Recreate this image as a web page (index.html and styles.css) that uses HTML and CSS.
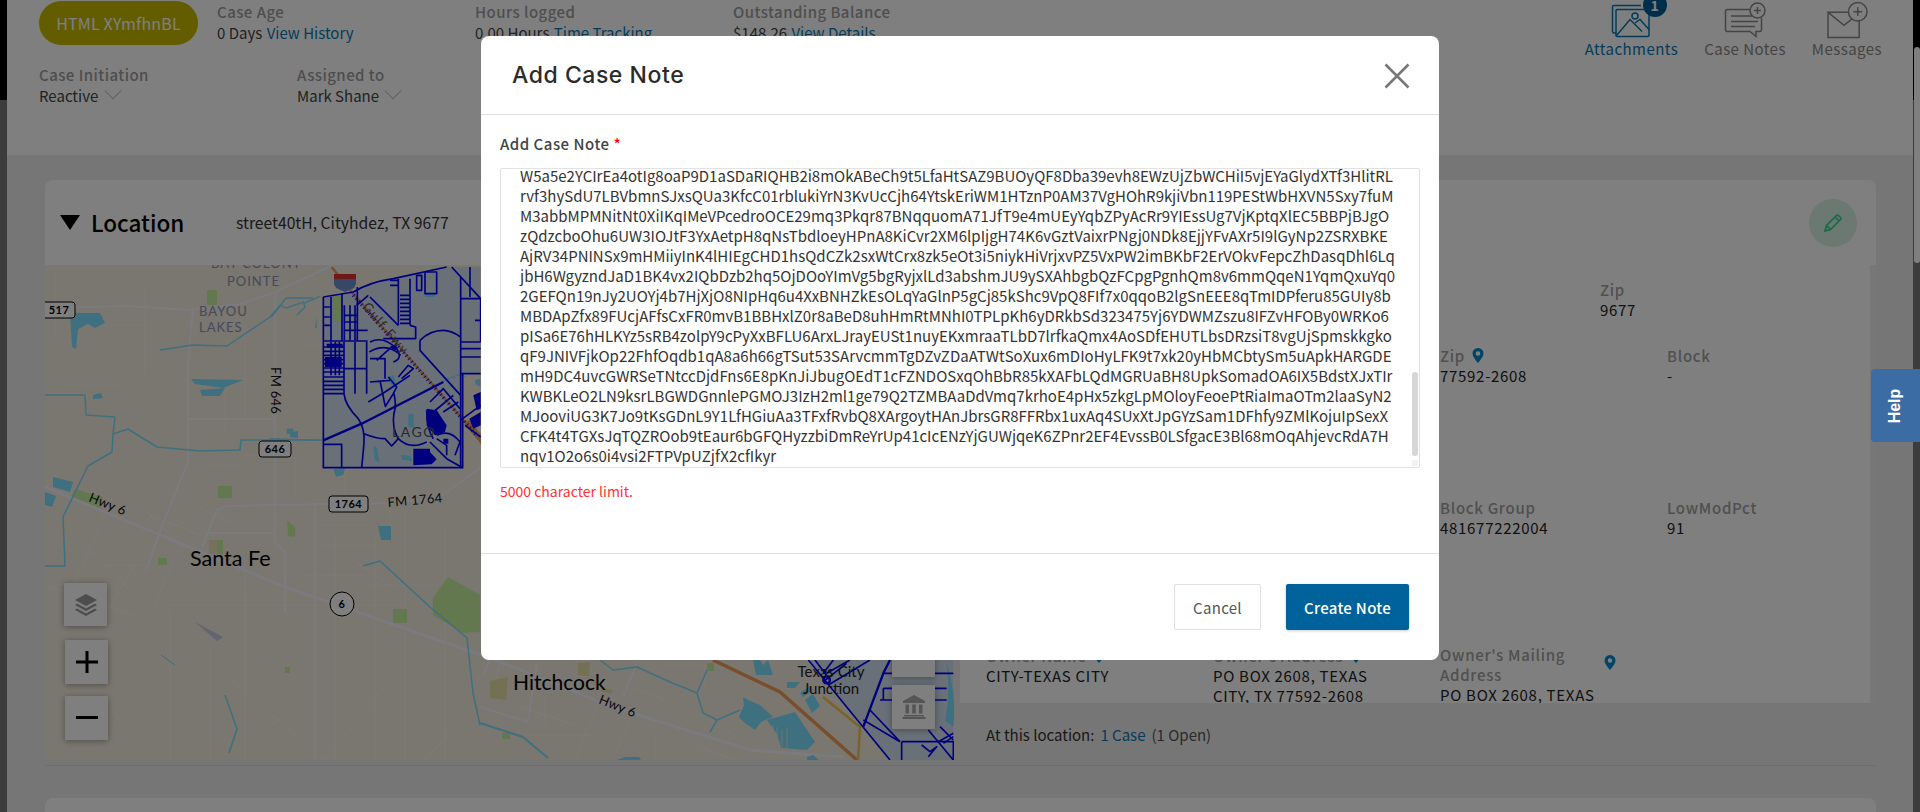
FILE: index.html
```html
<!DOCTYPE html>
<html lang="en">
<head>
<meta charset="utf-8">
<title>Add Case Note</title>
<link rel="stylesheet" href="styles.css">
</head>
<body>
<div class="shell">
  <div class="edge"><div class="edge-top"></div></div>
  <main class="main">
    <header class="case-head">
      <div class="head-row">
        <span class="pill">HTML XYmfhnBL</span>
        <div class="stat stat-age"><div class="lbl">Case Age</div><div class="val">0 Days <a class="link">View History</a></div></div>
        <div class="stat stat-hours"><div class="lbl">Hours logged</div><div class="val">0.00 Hours <a class="link">Time Tracking</a></div></div>
        <div class="stat"><div class="lbl">Outstanding Balance</div><div class="val">$148.26 <a class="link">View Details</a></div></div>
        <div class="tools">
          <div class="tool tool-on">
            <span class="badge">1</span>
            <svg class="tool-icon" width="42" height="36" viewBox="0 0 42 36" fill="none" stroke="currentColor" stroke-width="1.5"><path d="M6 31.5H3.500a2 2 0 0 1-1-1.500V5.500a1.500 1.500 0 0 1 1.500-1.500h27"/><rect x="6" y="8" width="33" height="27" rx="1"/><circle cx="25" cy="14.500" r="3"/><path d="M6.500 34 20 18l12 12M25 21.500l5-3.500 9 10"/></svg>
            <span class="tool-label">Attachments</span>
          </div>
          <div class="tool">
            <svg class="tool-icon" width="42" height="36" viewBox="0 0 42 36" fill="none" stroke="currentColor" stroke-width="1.500"><path d="M32 8H3.500a2 2 0 0 0-2 2v18a2 2 0 0 0 2 2H26l6 5v-5h3.500a2 2 0 0 0 2-2V16"/><path d="M7 14.500h25M7 20h27M7 25h24"/><circle cx="33.500" cy="9" r="7.500" fill="#fff"/><path d="M33.500 5.500v7M30 9h7"/></svg>
            <span class="tool-label">Case Notes</span>
          </div>
          <div class="tool">
            <svg class="tool-icon" width="46" height="40" viewBox="0 0 46 40" fill="none" stroke="currentColor" stroke-width="1.500"><path d="M3.500 12.500h32v26H3.500z"/><path d="M4 13l16 13 16-13"/><circle cx="34" cy="12" r="9.500" fill="#fff"/><path d="M34 7.500v9M29.500 12h9"/></svg>
            <span class="tool-label">Messages</span>
          </div>
        </div>
      </div>
      <div class="head-row head-row-b">
        <div class="stat stat-init"><div class="lbl">Case Initiation</div><div class="val">Reactive <span class="chev"></span></div></div>
        <div class="stat"><div class="lbl">Assigned to</div><div class="val">Mark Shane <span class="chev"></span></div></div>
      </div>
    </header>

    <section class="cases">
      <article class="card">
        <div class="card-head">
          <span class="tri"></span>
          <h2 class="card-title">Location</h2>
          <span class="card-addr">street40tH, Cityhdez, TX 9677</span>
          <span class="edit-btn">
            <svg width="20" height="20" viewBox="0 0 20 20" fill="none" stroke="#2fd68e" stroke-width="1.700"><path d="M2 18l1.500-5.500L13.500 2.500a1.500 1.500 0 0 1 2 0l2 2a1.500 1.500 0 0 1 0 2L7.500 16.500z"/><path d="M12 4l4 4M3.500 12.500l4 4"/></svg>
          </span>
        </div>
        <div class="card-body">
          <div class="map">
            <svg class="map-art" width="909" height="495" viewBox="0 0 909 495" fill="none">
              <g stroke="#fbf6ee" stroke-width="1">
                <path d="M10 10v60M40 60h60v50M20 120h60M100 20v80M0 320l90 30M30 270l60 60M60 250l-40 90M90 300l-30 50M120 270l60 30M130 290l-20 50M150 300h40M200 330v100M120 340h240M125 345v150M165 380v115M200 300v195M290 270v225M330 270v225M360 240v255M400 260v235M180 120v50M255 80h30M200 60v100M0 400l80 95M60 440l50 55M180 410l100 85M210 470l60-40M340 420l-60 75M440 430l-60 65M325 320h80M300 290l45 30"/>
                <path d="M470 440l60 20M480 470h70M560 420l-30 75M610 470v25M650 480l40 15M500 410v50M590 440l-20 50M530 400l90 35M620 400h40v25M665 455l40 25M455 400l-10 30M510 410l40 12M610 430l20 10"/>
                <path d="M200 190h30v60M250 190v40M160 200h40M150 240l40 20M100 245l40 40M60 300h40M275 260h50M270 280h60M260 310h60M300 205v30M345 230v40M130 255l40 16M105 250l60 24"/>
              </g>
              <g fill="#c8f0a0"><rect x="162" y="25" width="10" height="15"/><rect x="173" y="221" width="14" height="12"/><rect x="348" y="344" width="14" height="14"/><rect x="113" y="293" width="9" height="7"/><path d="M242 256l8 6v10l-7-1z"/><rect x="172" y="275" width="6" height="14"/><rect x="240" y="402" width="5" height="6"/><rect x="457" y="468" width="8" height="6"/><rect x="662" y="398" width="7" height="8"/><path d="M30 224l28 8-3 12-30-10z"/><path d="M388 333l15-21 32 18v37l-17 1-30-18z"/></g>
              <g fill="#e8e0a6"><path d="M445 416l18-4-2 23-16-2z"/><path d="M533 398l12-1-1 14-11-1z"/><path d="M558 422l10 4-2 3-10-3z"/><rect x="164" y="275" width="8" height="14" opacity=".7"/></g>
              <g stroke="#f6f6ff" stroke-linejoin="round" stroke-width="2">
                <path d="M0 43l82-2 63 4 50-6 33-11L288 0"/>
                <path d="M230 28v249l10 10v60"/>
                <path d="M270 238v257"/>
                <path d="M148 45l-5 52v100l-28 69-14 40"/>
                <path d="M143 154h87"/>
                <path d="M157 282l15-37 10-4 103-2M322 239l70-5 43-31"/>
                <path d="M163 268h67"/>
                <path d="M0 222l240 100 205 71 123 49 137 43 95 7" stroke-width="3"/>
                <path d="M435 442l48 15 9-59M592 398l-14 34M445 395l-6 14"/>
              </g>
              <path d="M150 357l28 15 -6 4z" fill="#c5c8e0"/>
              <g stroke="#7ee0ff" stroke-width="1.500" stroke-linejoin="round">
                <path d="M0 130h40l1 20 29 2-2 17 15-5 29 18 43 4 40-1 1-10 81 0"/>
                <path d="M68 169l-1 18-24 14-25 51 2 49H0"/>
                <path d="M115 85l33-5 34 1 46-31 13-17 27 0"/>
                <path d="M318 301l17-5 50 46 37 31 6 55 7 32"/>
                <path d="M555 395l13 10 24-3 33 15 27 11 10-23M652 428l6 20 14 7 23-10M672 455l-7 12"/>
                <path d="M435 458l43 14 25 21" stroke-width="2"/>
                <path d="M180 430l12 34 -8 24"/>
                <path d="M116 390l14 10" stroke-width="1"/>
              </g>
              <g fill="#7ee0ff">
                <path d="M8 212l20 5-3 10-17-5zM0 227l11 4-4 11-7-2zM25 48l30 0 5 10-10 5-7-4-10 5-2 20-4-2zM146 114l52 1-20 8 -28-4zM155 125l25-2-5 8-18 0zM48 130l8-2 2 5-10 1zM333 261h13v14h-10zM245 167l8-1v7l-8-1z"/>
                <path d="M708 395l7 0 3 5 5-5 5 15h-17zM742 417h13l-5 6h-8zM755 428l10-7 3 4-10 7zM760 435l8-6 7 12-8 7z"/>
                <path d="M698 432l5 3 12 5 13 12-12 5-6 8-10-7-6-6 5-12zM722 455l28-8 20 30-8 8-26-2-4-14z"/>
                <path d="M572 495l8-3h14l2 3zM762 492l6-2 6 5h-12z"/>
              </g>
              <g stroke="#f4ece0" stroke-width=".8"><path d="M728 460v25M732 462v23M737 465v20M742 463v22M768 470l8 20M772 468l10 22M777 474l8 16"/></g>
              <path d="M668 395l67 32 77 68" stroke="#f09c58" stroke-width="3.500"/>
              <path d="M778 432l37 30-2 33" stroke="#f4c450" stroke-width="2.500"/>
              <g transform="translate(435 235) scale(.33333)">
                <path d="M985 480L1230 780H1420V480z" fill="#d2e0f0"/>
                <path d="M1400 490Q1430 580 1420 680L1395 662Q1412 580 1400 490z" fill="#7ee0ff"/>
                <g stroke="#0000ff" stroke-width="5" stroke-linejoin="round">
                  <path d="M985 480L1230 780M1005 480L1050 540M1040 520L1110 480M1030 545L1100 490M1045 555L1170 480M1060 480L1030 520"/>
                  <path d="M1150 680L1210 520L1230 480" stroke-width="7"/>
                  <path d="M1210 520H1420M1210 565H1400M1200 600H1400M1210 565V600M1150 660L1260 725M1170 630L1260 725M1265 725H1420V780M1265 725V780"/>
                  <path d="M1345 690L1420 780M1325 735L1350 755L1370 740L1345 770M1375 725L1420 700M1390 730L1420 710M1380 680L1420 720"/>
                </g>
                <circle cx="1040" cy="540" r="10" stroke="#0000ff" stroke-width="7"/>
              </g>
              <g transform="translate(225 -3) scale(.33333)">
                <path d="M160 105l90-15Q300 60 370 50L530 15H632V335H578V617H160z" fill="#d2e0f0"/>
                <path d="M188 100h28v80h-28z" fill="#c8f0a0"/>
                <g fill="#7ee0ff"><path d="M415 455h15l3 45-18-5zM350 345l20-6 12 30-14 7zM310 550l12 10 6 40-14-5zM392 578l30 5 5 15-30-5zM190 622l35-4-5 20-22 6zM615 355l16-5v25l-14-8zM50 500h20v15h-20zM140 165l-5 30 5 5zM465 105h30v-8h-30z"/></g>
                <g stroke="#7ee0ff" stroke-width="4" fill="none"><path d="M0 165l30-35 20 8 50-18 5 15-25 25M100 125l50-22M520 358l45-20 20 5"/><path d="M0 530l155 5"/></g>
                <path d="M185 15l60 75L620 520l20 30" stroke="#f09c58" stroke-width="7"/>
                <path d="M590 480l50 60" stroke="#f09c58" stroke-width="18"/>
                <g stroke="#0000ff" stroke-width="5" stroke-linejoin="round">
                  <path d="M160 105V617H578V335M160 105l90-15Q300 60 370 50L530 15"/>
                  <path d="M545 15l87 95M572 45V617M600 15V105M572 110H632V240M572 240H632M572 260H632M572 285H632M572 335H632M615 175H632"/>
                  <path d="M385 50V190M420 50V190M360 55h25M360 70h25V50M440 40h15V85h-15zM465 30h35V95H465z"/>
                  <path d="M390 100h30M390 112h30M390 124h30M390 136h30M390 148h30M390 160h30M390 172h30M390 184h30"/>
                  <path d="M420 190l17 5v35H340M300 105l85 85"/>
                  <path d="M450 235Q480 205 520 205Q545 205 572 225M450 235V265L572 400"/>
                  <path d="M183 105V237M216 95V237M160 135H183M160 165H183M160 190H183M160 237H293M262 75V237"/>
                  <path d="M223 130V235M240 130V235M255 130V235M223 160H262M223 180H262M223 205H293M295 100l-35 30"/>
                  <path d="M160 345H222M160 358H222M160 370H222M160 382H222M160 395H222M222 240V395M255 240V395M290 240V395M222 320H290"/>
                  <path d="M183 240V340M196 240V340M208 240V340M160 255H222M160 268H222M160 280H222M160 293H222M160 305H222M160 318H222M160 330H222"/>
                  <path d="M222 395Q225 430 265 470Q285 500 282 540Q280 570 275 617"/>
                  <path d="M160 535L275 485L520 360" stroke-width="7"/>
                  <path d="M160 547H215V617M295 420L345 390L420 340M282 515Q320 530 345 530L365 552L385 530"/>
                  <path d="M372 450Q365 500 385 530Q420 565 470 540M330 355L345 430M300 360L360 355M355 345L380 375L370 395L345 435M372 395Q380 430 372 455"/>
                  <path d="M300 240Q340 220 380 260Q400 290 370 300M298 270Q350 240 392 280M320 295L370 250M300 290H345V350M395 350L430 320L415 310L385 345"/>
                  <path d="M480 420L520 380L570 440M490 450L550 400M500 520Q540 500 570 540L555 580M530 590L578 617M480 540Q510 570 530 590M470 445Q470 500 490 530M578 470L632 430M520 450l45-30M585 490l47 35M500 530l30 20v30"/>
                </g>
                <path d="M250 100L620 520" stroke="#0000ff" stroke-width="11" stroke-dasharray="3 9" opacity=".9"/>
                <g fill="#0000ff">
                  <path d="M470 440l30 5 30 45-5 20-30 10-25-30zM430 560h50v10l20 22-15 15-55 3zM610 400l22-10v50l-12 5zM598 470l34-20v40l-22 10zM165 285h50v30h-50zM170 245h48v12h-48zM365 250h15v15h-15zM520 530h15v15h-15z"/>
                </g>
              </g>
              <g class="shield"><rect x="-6" y="37" width="36" height="16" rx="3"/><rect x="214" y="176" width="32" height="16" rx="3"/><rect x="284" y="231" width="39" height="16" rx="3"/><circle cx="297" cy="339" r="12"/></g>
              <path d="M289 13h22v6l-2 4-9 4-9-4-2-4z" fill="#6f8fd0"/><path d="M289 9h22v5h-22z" fill="#e03030"/>
              <text class="m-shield" x="14" y="49" text-anchor="middle">517</text>
              <text class="m-shield" x="230" y="188" text-anchor="middle">646</text>
              <text class="m-shield" x="303.500" y="243" text-anchor="middle">1764</text>
              <text class="m-shield" x="297" y="343" text-anchor="middle">6</text>
              <text class="m-area" x="166" y="3">BAY COLONY</text>
              <text class="m-area" x="182" y="21">POINTE</text>
              <text class="m-area" x="154" y="51">BAYOU</text>
              <text class="m-area" x="154" y="67">LAKES</text>
              <text class="m-area m-dark" x="347" y="172">LAGO</text>
              <text class="m-town m-town-a" x="145" y="301">Santa Fe</text>
              <text class="m-town" x="468" y="425">Hitchcock</text>
              <text class="m-road" transform="translate(43 236) rotate(22)">Hwy 6</text>
              <text class="m-road" transform="translate(553 438) rotate(22)">Hwy 6</text>
              <text class="m-road" transform="translate(226 102) rotate(90)">FM 646</text>
              <text class="m-road" transform="translate(343 242) rotate(-5)">FM 1764</text>
              <text class="m-road m-hwy" transform="translate(317 42) rotate(50)">Gulf Fwy</text>
              <text class="m-city" x="786" y="412" text-anchor="middle">Texas City</text>
              <text class="m-city" x="786" y="429" text-anchor="middle">Junction</text>
            </svg>
            <span class="map-btn map-btn-layers">
              <svg width="24" height="22" viewBox="0 0 24 22" fill="#9a9a9a"><path d="M12 0l11 6-11 6L1 6z"/><path d="M3 9.500l9 5 9-5 2 1.500-11 6-11-6z"/><path d="M3 14.500l9 5 9-5 2 1.500-11 6-11-6z"/></svg>
            </span>
            <span class="map-btn map-btn-plus">
              <svg width="22" height="22" viewBox="0 0 22 22" fill="#000"><path d="M9.500 0h3v9.500H22v3h-9.500V22h-3v-9.500H0v-3h9.500z"/></svg>
            </span>
            <span class="map-btn map-btn-minus">
              <svg width="22" height="4" viewBox="0 0 22 4" fill="#000"><path d="M0 0h22v3H0z"/></svg>
            </span>
            <span class="map-btn map-btn-up"></span>
            <span class="map-btn map-btn-bank">
              <svg width="24" height="24" viewBox="0 0 24 24" fill="#aaa"><path d="M12 0l11 6v2H1V6z"/><path d="M3.500 9.500h3.500v9H3.500zM10.200 9.500h3.600v9h-3.600zM17 9.500h3.500v9H17z"/><path d="M2 20h20v1.500H2zM0.500 22h23v2H0.500z"/></svg>
            </span>
          </div>
          <div class="gutter"></div>
          <div class="side">
            <div class="info">
              <div class="info-row info-row-a">
                <div class="field"><div class="f-lbl">Zip</div><div class="f-val">9677</div></div>
              </div>
              <div class="info-row info-row-b">
                <div class="field"><div class="f-lbl">Zip <svg class="pin" width="12" height="15" viewBox="0 0 12 15"><path fill-rule="evenodd" fill="#0088cc" d="M6 0a5.500 5.500 0 0 1 5.500 5.500C11.500 9 6 15 6 15S.5 9 .5 5.500A5.500 5.500 0 0 1 6 0zm0 3.200a2.300 2.300 0 1 0 0 4.600 2.300 2.300 0 0 0 0-4.600z"/></svg></div><div class="f-val">77592-2608</div></div>
                <div class="field"><div class="f-lbl">Block</div><div class="f-val">-</div></div>
              </div>
              <div class="info-row info-row-c">
                <div class="field"><div class="f-lbl">Block Group</div><div class="f-val">481677222004</div></div>
                <div class="field"><div class="f-lbl">LowModPct</div><div class="f-val">91</div></div>
              </div>
              <div class="info-row info-row-d">
                <div class="field"><div class="f-lbl">Owner Name <svg class="pin" width="12" height="15" viewBox="0 0 12 15"><path fill-rule="evenodd" fill="#0088cc" d="M6 0a5.500 5.500 0 0 1 5.500 5.500C11.500 9 6 15 6 15S.5 9 .5 5.500A5.500 5.500 0 0 1 6 0zm0 3.200a2.300 2.300 0 1 0 0 4.600 2.300 2.300 0 0 0 0-4.600z"/></svg></div><div class="f-val">CITY-TEXAS CITY</div></div>
                <div class="field"><div class="f-lbl">Owner's Address <svg class="pin" width="12" height="15" viewBox="0 0 12 15"><path fill-rule="evenodd" fill="#0088cc" d="M6 0a5.500 5.500 0 0 1 5.500 5.500C11.500 9 6 15 6 15S.5 9 .5 5.500A5.500 5.500 0 0 1 6 0zm0 3.200a2.300 2.300 0 1 0 0 4.600 2.300 2.300 0 0 0 0-4.600z"/></svg></div><div class="f-val f-val-addr">PO BOX 2608, TEXAS CITY, TX 77592-2608</div></div>
                <div class="field field-pin"><div class="f-lbl">Owner's Mailing Address</div><svg class="pin pin-side" width="12" height="15" viewBox="0 0 12 15"><path fill-rule="evenodd" fill="#0088cc" d="M6 0a5.500 5.500 0 0 1 5.500 5.500C11.500 9 6 15 6 15S.5 9 .5 5.500A5.500 5.500 0 0 1 6 0zm0 3.200a2.300 2.300 0 1 0 0 4.600 2.300 2.300 0 0 0 0-4.600z"/></svg><div class="f-val">PO BOX 2608, TEXAS</div></div>
              </div>
            </div>
            <div class="side-foot"><span class="at-label">At this location:</span> <a class="link">1 Case</a> <span class="at-open">(1 Open)</span></div>
          </div>
          <div class="side-scroll"></div>
        </div>
      </article>
      <div class="card card-next"></div>
    </section>
  </main>
  <div class="edge edge-right"><div class="edge-top"></div><span class="page-thumb"></span></div>
</div>

<div class="overlay"></div>

<a class="help-tab"><span class="help-text">Help</span></a>

<div class="modal">
  <div class="modal-head">
    <h1 class="modal-title">Add Case Note</h1>
    <svg class="modal-close" width="26" height="26" viewBox="0 0 26 26" stroke="#777" stroke-width="2.600"><path d="M1.500 1.500l23 23M24.500 1.500l-23 23"/></svg>
  </div>
  <div class="modal-body">
    <label class="note-label">Add Case Note <span class="req">*</span></label>
    <div class="note-box">
      <div class="note-text">W5a5e2YCIrEa4otIg8oaP9D1aSDaRIQHB2i8mOkABeCh9t5LfaHtSAZ9BUOyQF8Dba39evh8EWzUjZbWCHiI5vjEYaGlydXTf3HlitRL
rvf3hySdU7LBVbmnSJxsQUa3KfcC01rblukiYrN3KvUcCjh64YtskEriWM1HTznP0AM37VgHOhR9kjiVbn119PEStWbHXVN5Sxy7fuM
M3abbMPMNitNt0XiIKqIMeVPcedroOCE29mq3Pkqr87BNqquomA71JfT9e4mUEyYqbZPyAcRr9YIEssUg7VjKptqXlEC5BBPjBJgO
zQdzcboOhu6UW3IOJtF3YxAetpH8qNsTbdloeyHPnA8KiCvr2XM6lpIjgH74K6vGztVaixrPNgj0NDk8EjjYFvAXr5I9lGyNp2ZSRXBKE
AjRV34PNINSx9mHMiiyInK4lHIEgCHD1hsQdCZk2sxWtCrx8zk5eOt3i5niykHiVrjxvPZ5VxPW2imBKbF2ErVOkvFepcZhDasqDhl6Lq
jbH6WgyzndJaD1BK4vx2IQbDzb2hq5OjDOoYImVg5bgRyjxlLd3abshmJU9ySXAhbgbQzFCpgPgnhQm8v6mmQqeN1YqmQxuYq0
2GEFQn19nJy2UOYj4b7HjXjO8NIpHq6u4XxBNHZkEsOLqYaGlnP5gCj85kShc9VpQ8FIf7x0qqoB2lgSnEEE8qTmIDPferu85GUIy8b
MBDApZfx89FUcjAFfsCxFR0mvB1BBHxlZ0r8aBeD8uhHmRtMNhI0TPLpKh6yDRkbSd323475Yj6YDWMZszu8IFZvHFOBy0WRKo6
pISa6E76hHLKYz5sRB4zolpY9cPyXxBFLU6ArxLJrayEUSt1nuyEKxmraaTLbD7lrfkaQmx4AoSDfEHUTLbsDRzsiT8vgUjSpmskkgko
qF9JNIVFjkOp22FhfOqdb1qA8a6h66gTSut53SArvcmmTgDZvZDaATWtSoXux6mDIoHyLFK9t7xk20yHbMCbtySm5uApkHARGDE
mH9DC4uvcGWRSeTNtccDjdFns6E8pKnJiJbugOEdT1cFZNDOSxqOhBbR85kXAFbLQdMGRUaBH8UpkSomadOA6IX5BdstXJxTIr
KWBKLeO2LN9ksrLBGWDGnnlePGMOJ3IzH2ml1ge79Q2TZMBAaDdVmq7krhoE4pHx5zkgLpMOloyFeoePtRiaImaOTm2laaSyN2
MJooviUG3K7Jo9tKsGDnL9Y1LfHGiuAa3TFxfRvbQ8XArgoytHAnJbrsGR8FFRbx1uxAq4SUxXtJpGYzSam1DFhfy9ZMlKojuIpSexX
CFK4t4TGXsJqTQZROob9tEaur6bGFQHyzzbiDmReYrUp41cIcENzYjGUWjqeK6ZPnr2EF4EvssB0LSfgacE3Bl68mOqAhjevcRdA7H
nqv1O2o6s0i4vsi2FTPVpUZjfX2cfIkyr</div>
      <span class="note-thumb"></span>
      <span class="note-grip"></span>
    </div>
    <p class="note-limit">5000 character limit.</p>
  </div>
  <div class="modal-foot">
    <button class="btn btn-cancel">Cancel</button>
    <button class="btn btn-primary">Create Note</button>
  </div>
</div>
</body>
</html>
```
FILE: styles.css
```css
* { box-sizing: border-box; }
html, body { margin: 0; height: 812px; overflow: hidden; }
body {
  position: relative;
  font-family: "Noto Sans CJK SC", "Noto Sans CJK JP", "Noto Sans", sans-serif;
  color: #333;
  background: #fff;
}
.shell { display: flex; height: 812px; }
.edge { width: 7px; flex: none; background: #787878; position: relative; }
.edge-top { height: 100px; background: #000; }
.page-thumb { position: absolute; left: 1px; top: 47px; width: 6px; height: 216px; border-radius: 3px; background: #fff; }
.main { flex: 1; min-width: 0; display: flex; flex-direction: column; }

/* case header */
.case-head { height: 155px; background: #fff; padding: 1px 0 0 32px; flex: none; }
.head-row { display: flex; align-items: flex-start; height: 63px; }
.head-row-b { height: 45px; }
.pill {
  width: 159px; height: 44px; border-radius: 22px; background: #c6ba00; color: #fff;
  display: flex; align-items: center; justify-content: center; font-size: 16px; margin-right: 19px; letter-spacing: .2px;
}
.stat { display: flex; flex-direction: column; }
.stat-age { width: 258px; }
.stat-hours { width: 258px; }
.stat-init { width: 258px; }
.lbl { font-size: 15px; line-height: 21px; font-weight: 500; color: #9c9c9c; letter-spacing: .45px; }
.val { font-size: 15px; line-height: 21px; color: #444; }
.link { color: #0a77b5; }
.val .link { margin-left: 1px; }
.chev { display: inline-block; width: 12px; height: 12px; border-right: 1px solid #c4c4c4; border-bottom: 1px solid #c4c4c4; transform: rotate(45deg); margin: 0 0 5px 5px; }

.tools { margin-left: auto; display: flex; gap: 26px; padding-right: 31px; margin-top: -1px; }
.tool { position: relative; display: flex; flex-direction: column; align-items: center; color: #888; }
.tool-on { color: #0a77b5; }
.tool-icon { display: block; height: 39px; margin-bottom: 0; }
.tool-label { font-size: 15px; line-height: 20px; letter-spacing: .45px; white-space: nowrap; }
.badge {
  position: absolute; left: 58px; top: -7px; width: 24px; height: 24px; border-radius: 50%;
  background: #005f99; color: #fff; font-size: 14px; display: flex; align-items: center; justify-content: center; font-weight: 700;
}

/* section */
.cases { flex: 1; min-height: 0; background: #ededed; padding: 25px 37px 0 38px; display: flex; flex-direction: column; gap: 32px; overflow: hidden; }
.card { background: #fff; border-radius: 8px 8px 0 0; flex: none; }
.card-next { height: 40px; }
.card-head { height: 85px; display: flex; align-items: center; padding: 0 19px 0 15px; }
.tri { width: 0; height: 0; border-left: 10px solid transparent; border-right: 10px solid transparent; border-top: 15px solid #000; margin-right: 11px; }
.card-title { margin: 0 0 1px; font-size: 22.500px; line-height: 30px; font-weight: 500; color: #000; width: 145px; }
.card-addr { font-size: 15.700px; color: #333; }
.edit-btn { margin-left: auto; width: 48px; height: 48px; border-radius: 50%; background: #d8f0e4; display: flex; align-items: center; justify-content: center; }

.card-body { display: flex; height: 501px; border-bottom: 1px solid #dcdcdc; background: #ededed; }
.map { position: relative; width: 909px; height: 495px; flex: none; background: #f4ece0; overflow: hidden; }
.map-art { display: block; }
.shield rect, .shield circle { fill: #fff; stroke: #000; stroke-width: 1; }
.map-art text { font-family: "Lato", "Noto Sans", sans-serif; }
.m-shield { font-size: 11px; font-weight: 700; fill: #000; letter-spacing: .5px; }
.m-area { font-size: 13px; fill: #8a93b8; letter-spacing: 1px; }
.m-dark { fill: #555; font-size: 14px; letter-spacing: 1.500px; }
.m-town { font-size: 21px; fill: #000; }
.m-town-a { font-size: 21.500px; }
.m-road { font-size: 13px; fill: #111; letter-spacing: .3px; }
.m-hwy { fill: #555; letter-spacing: 1.500px; }
.m-city { font-size: 15px; fill: #222; }
.map-btn {
  position: absolute; width: 43px; height: 43px; background: #fff; border-radius: 1px;
  box-shadow: 0 1px 6px rgba(0,0,0,.35); display: flex; align-items: center; justify-content: center;
}
.map-btn-layers { left: 19px; top: 318px; }
.map-btn-plus { left: 20px; top: 375px; height: 44px; }
.map-btn-minus { left: 20px; top: 431px; height: 44px; }
.map-btn-up { left: 847px; top: 370px; height: 42px; }
.map-btn-bank { left: 847px; top: 420px; height: 44px; }

.gutter { width: 6px; flex: none; }
.side { flex: 1; min-width: 0; display: flex; flex-direction: column; height: 500px; }
.info { height: 438px; background: #fff; overflow: hidden; padding-left: 26px; flex: none; }
.side-scroll { width: 6px; height: 438px; flex: none; background: #efefef; }
.side-foot { height: 62px; display: flex; align-items: center; gap: 6px; padding-left: 26px; font-size: 15px; color: #333; }
.at-open { color: #555; }
.info-row { display: flex; }
.info-row-a { padding: 14px 0 0 614px; height: 80px; }
.info-row-b { padding-left: 454px; height: 152px; }
.info-row-c { padding-left: 454px; height: 148px; }
.field { width: 227px; position: relative; font-size: 15px; line-height: 20px; flex: none; }
.f-lbl { color: #a0a0a0; font-weight: 500; letter-spacing: .7px; line-height: 21px; }
.f-val { color: #222; letter-spacing: .7px; width: 200px; }
.f-val-addr { width: 175px; }
.pin { vertical-align: -1px; margin-left: 3px; }
.field-pin .f-lbl { width: 150px; line-height: 20px; }
.pin-side { position: absolute; left: 161px; top: 10px; }

/* overlay */
.overlay { position: absolute; inset: 0; background: rgba(0,0,0,.5); z-index: 10; }
.help-tab {
  position: absolute; right: 0; top: 369px; width: 49px; height: 73px; z-index: 20; background: #3b6ca3;
  border-radius: 4px 0 0 4px; display: flex; align-items: center; justify-content: center;
}
.help-text { transform: rotate(-90deg); color: #fff; font: 700 16px "Liberation Sans", sans-serif; }

/* modal */
.modal {
  position: absolute; left: 481px; top: 36px; width: 958px; height: 624px; z-index: 30;
  background: #fff; border-radius: 8px; display: flex; flex-direction: column;
}
.modal-head { height: 79px; flex: none; display: flex; align-items: center; justify-content: space-between; padding: 0 29px 0 31px; border-bottom: 1px solid #dedede; }
.modal-title { margin: 0; font: 500 23px "Inter", "Noto Sans", sans-serif; color: #2b2b2b; letter-spacing: .55px; }
.modal-close { display: block; margin-top: 1px; }
.modal-body { height: 438px; flex: none; padding: 19px 19px 0; }
.note-label { display: block; font-size: 15px; line-height: 20px; font-weight: 500; color: #444; letter-spacing: .5px; }
.req { color: #f00; }
.note-box { position: relative; height: 300px; margin-top: 14px; border: 1px solid #e2e2e2; border-radius: 2px; overflow: hidden; }
.note-text { white-space: pre; font-size: 15px; line-height: 20px; color: #333; padding-left: 19px; margin-top: -3px; }
.note-thumb { position: absolute; right: 1px; top: 203px; width: 6px; height: 84px; border-radius: 3px; background: #d6d6d6; }
.note-grip { position: absolute; right: 1px; bottom: 1px; width: 6px; height: 6px; background: #f2f2f2; }
.note-limit { margin: 13px 0 0; font-size: 14px; line-height: 20px; color: #f33; }
.modal-foot { flex: 1; border-top: 1px solid #dedede; display: flex; justify-content: flex-end; align-items: flex-start; gap: 25px; padding: 30px 30px 0 0; }
.btn { height: 46px; border-radius: 2px; font: 500 15px "Noto Sans CJK SC", "Noto Sans", sans-serif; letter-spacing: .3px; cursor: pointer; }
.btn-cancel { width: 87px; background: #fff; border: 1px solid #e0e0e0; color: #555; font-weight: 400; }
.btn-primary { width: 123px; background: #00629b; border: 0; color: #fff; box-shadow: 0 1px 3px rgba(0,0,0,.2); }
```
